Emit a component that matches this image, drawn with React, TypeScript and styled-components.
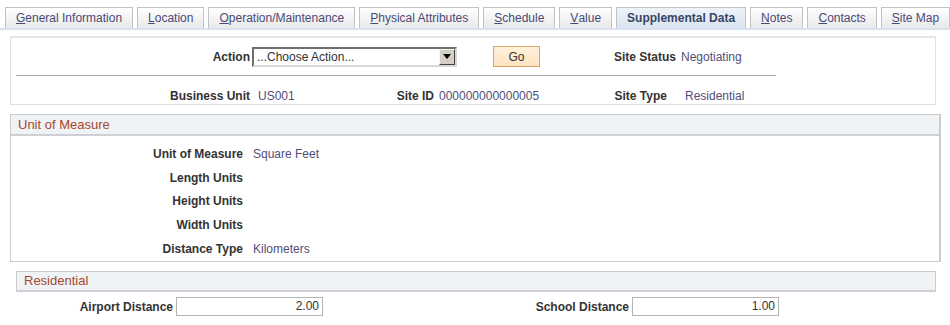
import * as React from "react";
import styled, { createGlobalStyle } from "styled-components";

const GlobalStyle = createGlobalStyle`
  body {
    margin: 0;
    background: #ffffff;
    font-family: "Liberation Sans", Arial, sans-serif;
    font-size: 12px;
  }
`;

const Page = styled.div`
  width: 950px;
  height: 325px;
  overflow: hidden;
  padding-top: 7px;
  box-sizing: border-box;
`;

const TabBar = styled.div`
  display: flex;
  gap: 4px;
  padding-left: 5px;
  border-bottom: 2px solid #d7e2ee;
  height: 21px;
`;

const Tab = styled.div<{ $active?: boolean }>`
  display: flex;
  align-items: center;
  padding: 0 10px;
  height: 21px;
  box-sizing: border-box;
  border: 1px solid #c2c2c2;
  border-bottom: none;
  background: ${(p) =>
    p.$active
      ? "linear-gradient(#eef3f8, #d9e4ef)"
      : "linear-gradient(#ffffff, #e9e9e9)"};
  color: ${(p) => (p.$active ? "#3a4566" : "#4a4a78")};
  font-weight: ${(p) => (p.$active ? "bold" : "normal")};
  white-space: nowrap;

  u {
    text-decoration: underline;
  }
`;

const TopBox = styled.div`
  margin: 6px 0 0 10px;
  width: 926px;
  height: 69px;
  box-sizing: border-box;
  border: 1px solid #e0e0e0;
  border-top: 2px solid #e6e6e6;
  display: flex;
  flex-direction: column;
`;

const Row = styled.div<{ $h: number; $top?: number }>`
  display: flex;
  align-items: center;
  height: ${(p) => p.$h}px;
  margin-top: ${(p) => p.$top ?? 0}px;
`;

const Label = styled.div<{ $w: number }>`
  width: ${(p) => p.$w}px;
  flex: none;
  text-align: right;
  font-weight: bold;
  color: #333333;
  white-space: nowrap;
`;

const Value = styled.div<{ $w?: number; $pad?: number }>`
  width: ${(p) => (p.$w ? `${p.$w}px` : "auto")};
  box-sizing: border-box;
  flex: none;
  padding-left: ${(p) => p.$pad ?? 5}px;
  color: #534d78;
  white-space: nowrap;
`;

const Divider = styled.div`
  margin-left: 5px;
  width: 760px;
  height: 1px;
  background: #a8a8a8;
`;

const Select = styled.div`
  margin-left: 2px;
  width: 205px;
  height: 20px;
  box-sizing: border-box;
  border: 2px solid;
  border-color: #6f6f6f #d8d8d8 #d8d8d8 #6f6f6f;
  display: flex;
  align-items: center;
  justify-content: space-between;
  background: #fff;
  color: #333;
  padding-left: 3px;
`;

const ArrowButton = styled.div`
  width: 16px;
  height: 16px;
  box-sizing: border-box;
  background: #d4d0c8;
  border: 1px solid;
  border-color: #f4f4f4 #404040 #404040 #f4f4f4;
  display: flex;
  align-items: center;
  justify-content: center;
`;

const GoButton = styled.div`
  margin-left: 36px;
  width: 47px;
  height: 21px;
  box-sizing: border-box;
  border: 1px solid #d7a56c;
  background: linear-gradient(#fff1db, #fce3c0);
  color: #333;
  display: flex;
  align-items: center;
  justify-content: center;
`;

const Group = styled.div<{ $left: number; $w: number; $boxed?: boolean }>`
  margin: 9px 0 0 ${(p) => p.$left}px;
  width: ${(p) => p.$w}px;
  box-sizing: border-box;
  border: ${(p) => (p.$boxed ? "1px solid #cccccc" : "none")};
  border-right-width: ${(p) => (p.$boxed ? 2 : 0)}px;
`;

const GroupHeader = styled.div<{ $boxed?: boolean }>`
  height: 21px;
  box-sizing: border-box;
  background: #f0f3f5;
  border: ${(p) => (p.$boxed ? "none" : "1px solid #cccccc")};
  border-bottom: 2px solid #cdd1d5;
  color: #a6472b;
  font-size: 13px;
  display: flex;
  align-items: center;
  padding-left: 7px;
`;

const GroupBody = styled.div`
  padding: 6px 0 0;
`;

const Input = styled.div`
  margin-left: 3px;
  width: 147px;
  height: 19px;
  box-sizing: border-box;
  border: 1px solid #b4b4b4;
  background: #fff;
  color: #333;
  text-align: right;
  padding-right: 3px;
  line-height: 17px;
`;

const tabs = [
  { first: "G", rest: "eneral Information" },
  { first: "L", rest: "ocation" },
  { first: "O", rest: "peration/Maintenance" },
  { first: "P", rest: "hysical Attributes" },
  { first: "S", rest: "chedule" },
  { first: "V", rest: "alue" },
  { first: "", rest: "Supplemental Data", active: true },
  { first: "N", rest: "otes" },
  { first: "C", rest: "ontacts" },
  { first: "S", rest: "ite Map" },
];

const unitRows: [string, string][] = [
  ["Unit of Measure", "Square Feet"],
  ["Length Units", ""],
  ["Height Units", ""],
  ["Width Units", ""],
  ["Distance Type", "Kilometers"],
];

export default function App() {
  return (
    <Page>
      <GlobalStyle />
      <TabBar>
        {tabs.map((t) => (
          <Tab key={t.rest} $active={t.active}>
            {t.first && <u>{t.first}</u>}
            {t.rest}
          </Tab>
        ))}
      </TabBar>

      <TopBox>
        <Row $h={37}>
          <Label $w={239}>Action</Label>
          <Select>
            <span>...Choose Action...</span>
            <ArrowButton>
              <svg width="8" height="5" viewBox="0 0 8 5">
                <path d="M0 0h8L4 5z" fill="#000" />
              </svg>
            </ArrowButton>
          </Select>
          <GoButton>Go</GoButton>
          <Label $w={136}>Site Status</Label>
          <Value>Negotiating</Value>
        </Row>
        <Divider />
        <Row $h={16} $top={12}>
          <Label $w={239}>Business Unit</Label>
          <Value $w={139} $pad={8}>
            US001
          </Value>
          <Label $w={45}>Site ID</Label>
          <Value $w={180} $pad={5}>
            000000000000005
          </Value>
          <Label $w={53}>Site Type</Label>
          <Value $pad={18}>Residential</Value>
        </Row>
      </TopBox>

      <Group $left={10} $w={931} $boxed>
        <GroupHeader $boxed>Unit of Measure</GroupHeader>
        <GroupBody>
          {unitRows.map(([l, v]) => (
            <Row $h={23.8} key={l}>
              <Label $w={232}>{l}</Label>
              <Value $pad={10}>{v}</Value>
            </Row>
          ))}
        </GroupBody>
      </Group>

      <Group $left={16} $w={920}>
        <GroupHeader>Residential</GroupHeader>
      </Group>
      <Row $h={30}>
        <Label $w={173}>Airport Distance</Label>
        <Input>2.00</Input>
        <Label $w={306}>School Distance</Label>
        <Input>1.00</Input>
      </Row>
    </Page>
  );
}
